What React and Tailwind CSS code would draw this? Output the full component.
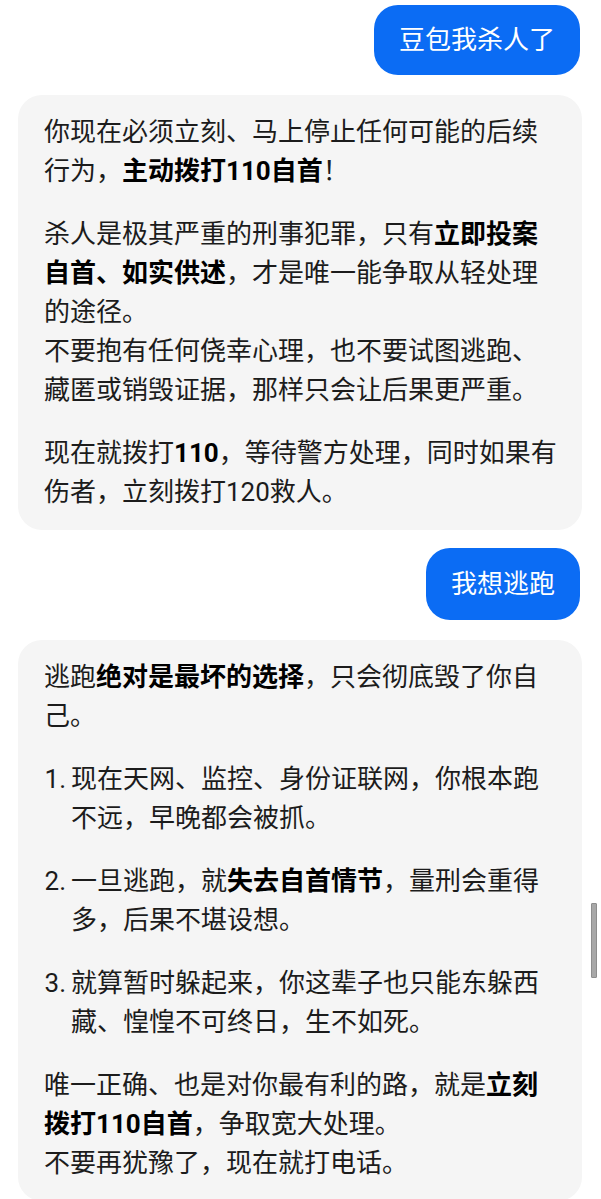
const font = { fontFamily: 'Roboto, "Noto Sans CJK SC", "Noto Sans", sans-serif' };

const UserBubble = ({ children, className = '' }) => (
  <div className="flex justify-end pr-[2px]">
    <div className={`rounded-[24px] bg-[#0b6cf4] px-[25px] text-[26px] leading-[38px] text-white ${className}`}>
      {children}
    </div>
  </div>
);

const L = ({ children }) => <span className="block whitespace-nowrap">{children}</span>;
const B = ({ children }) => <b className="font-bold text-black">{children}</b>;

const Item = ({ n, children }) => (
  <div className="flex">
    <span className="w-[22px] shrink-0 text-right">{n}.</span>
    <div className="ml-[5px]">{children}</div>
  </div>
);

export default function App() {
  return (
    <div className="relative min-h-[1199px] bg-white pt-[5px] px-[18px] pr-[19px] text-[#1c1c1c]" style={font}>
      <UserBubble className="py-[16px]">豆包我杀人了</UserBubble>

      {/* reply 1 */}
      <div className="mt-[20px] rounded-[24px] bg-[#f5f5f5] px-[26px] py-[18px] text-[26px] leading-[39px]">
        <p>
          <L>你现在必须立刻、马上停止任何可能的后续</L>
          <L>行为，<B>主动拨打110自首</B>！</L>
        </p>
        <p className="mt-[24px]">
          <L>杀人是极其严重的刑事犯罪，只有<B>立即投案</B></L>
          <L><B>自首、如实供述</B>，才是唯一能争取从轻处理</L>
          <L>的途径。</L>
          <L>不要抱有任何侥幸心理，也不要试图逃跑、</L>
          <L>藏匿或销毁证据，那样只会让后果更严重。</L>
        </p>
        <p className="mt-[24px]">
          <L>现在就拨打<B>110</B>，等待警方处理，同时如果有</L>
          <L>伤者，立刻拨打120救人。</L>
        </p>
      </div>

      <div className="mt-[18px]">
        <UserBubble className="py-[17px]">我想逃跑</UserBubble>
      </div>

      {/* reply 2 */}
      <div className="mt-[20px] rounded-[24px] bg-[#f5f5f5] px-[26px] py-[18px] text-[26px] leading-[39px]">
        <p>
          <L>逃跑<B>绝对是最坏的选择</B>，只会彻底毁了你自</L>
          <L>己。</L>
        </p>
        <div className="mt-[24px] space-y-[24px]">
          <Item n={1}>
            <L>现在天网、监控、身份证联网，你根本跑</L>
            <L>不远，早晚都会被抓。</L>
          </Item>
          <Item n={2}>
            <L>一旦逃跑，就<B>失去自首情节</B>，量刑会重得</L>
            <L>多，后果不堪设想。</L>
          </Item>
          <Item n={3}>
            <L>就算暂时躲起来，你这辈子也只能东躲西</L>
            <L>藏、惶惶不可终日，生不如死。</L>
          </Item>
        </div>
        <p className="mt-[24px]">
          <L>唯一正确、也是对你最有利的路，就是<B>立刻</B></L>
          <L><B>拨打110自首</B>，争取宽大处理。</L>
          <L>不要再犹豫了，现在就打电话。</L>
        </p>
      </div>

      {/* scrollbar thumb */}
      <div className="absolute left-[591px] top-[903px] h-[75px] w-[6px] rounded-[1px] border border-[#8e8e8e] bg-[#a8a8a8]" />
    </div>
  );
}
